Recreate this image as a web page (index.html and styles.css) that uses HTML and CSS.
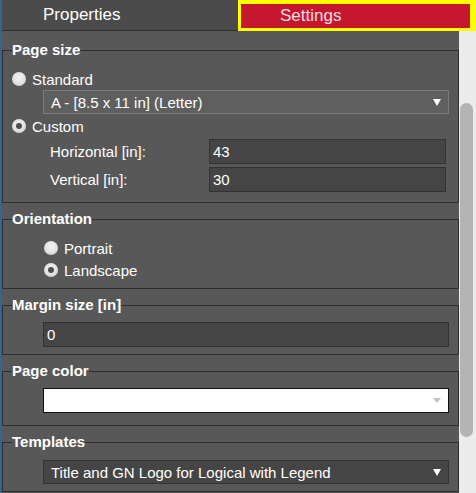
FILE: index.html
```html
<!DOCTYPE html>
<html>
<head>
<meta charset="utf-8">
<link rel="stylesheet" href="styles.css">
</head>
<body>
<div class="app">
  <div class="tabs">
    <div class="tab tab-properties">Properties</div>
    <div class="tab tab-settings">Settings</div>
  </div>
  <div class="main">
    <div class="content">
      <fieldset class="group group-size">
        <legend>Page size</legend>
        <div class="radio-row"><span class="radio"></span><span>Standard</span></div>
        <div class="select select-disabled"><span>A - [8.5 x 11 in] (Letter)</span><span class="caret"></span></div>
        <div class="radio-row row-custom"><span class="radio checked"></span><span>Custom</span></div>
        <div class="field-row"><span class="field-label">Horizontal [in]:</span><span class="input input-dim">43</span></div>
        <div class="field-row"><span class="field-label">Vertical [in]:</span><span class="input input-dim">30</span></div>
      </fieldset>
      <fieldset class="group group-orient">
        <legend>Orientation</legend>
        <div class="radio-row indent"><span class="radio"></span><span>Portrait</span></div>
        <div class="radio-row indent row-landscape"><span class="radio checked"></span><span>Landscape</span></div>
      </fieldset>
      <fieldset class="group group-margin">
        <legend>Margin size [in]</legend>
        <div class="input input-wide">0</div>
      </fieldset>
      <fieldset class="group group-color">
        <legend>Page color</legend>
        <div class="color-box"><span class="caret caret-light"></span></div>
      </fieldset>
      <fieldset class="group group-templates">
        <legend>Templates</legend>
        <div class="select select-dark"><span>Title and GN Logo for Logical with Legend</span><span class="caret"></span></div>
      </fieldset>
    </div>
    <div class="scrollbar"><div class="thumb"></div></div>
  </div>
</div>
</body>
</html>
```

FILE: styles.css
```css
* { box-sizing: border-box; }
html, body { margin: 0; padding: 0; }
body {
  width: 476px;
  height: 493px;
  overflow: hidden;
  background: #585858;
  font-family: "Liberation Sans", Arial, sans-serif;
  font-size: 15px;
  color: #ffffff;
}
.app {
  height: 493px;
  display: flex;
  flex-direction: column;
  border-left: 2px solid #3b6094;
}
.tabs {
  height: 31px;
  display: flex;
  flex: none;
}
.tab {
  height: 31px;
  display: flex;
  align-items: center;
  font-size: 17px;
}
.tab-properties {
  width: 236px;
  background: #4b4b4b;
  border-bottom: 1px solid #303030;
  padding-left: 41px;
}
.tab-settings {
  flex: 1;
  background: #c5182f;
  border-style: solid;
  border-color: #ffff00;
  border-width: 4px 6px 3px 3px;
  padding-left: 39px;
  color: #f6dde1;
}
.main {
  flex: 1;
  display: flex;
  min-height: 0;
}
.content {
  flex: 1;
  display: flex;
  flex-direction: column;
  gap: 7px;
  padding-top: 10px;
}
.group {
  margin: 0;
  border: 1px solid #2e2e2e;
  padding: 10px 9px 9px 9px;
  min-width: 0;
  display: flex;
  flex-direction: column;
}
.group legend {
  padding: 0;
  font-weight: bold;
  font-size: 15px;
  line-height: 18px;
}
.group-size { padding-bottom: 10px; }
.group-orient { padding-bottom: 8px; }
.group-margin { padding-top: 8px; padding-bottom: 7px; }
.group-color { padding-top: 8px; padding-bottom: 12px; }
.group-templates { padding-top: 9px; padding-bottom: 7px; }

.radio-row {
  height: 20px;
  display: flex;
  align-items: center;
  gap: 6px;
}
.radio-row.indent { margin-left: 32px; }
.row-custom { margin-top: 2px; }
.row-landscape { margin-top: 2px; }
.radio {
  width: 14px;
  height: 14px;
  border-radius: 50%;
  background: radial-gradient(circle at 50% 40%, #f4f4f4 0%, #e2e2e2 55%, #bdbdbd 100%);
  display: flex;
  align-items: center;
  justify-content: center;
  flex: none;
}
.radio.checked::after {
  content: "";
  width: 6px;
  height: 6px;
  border-radius: 50%;
  background: #505050;
}
.select {
  margin-left: 31px;
  height: 24px;
  display: flex;
  align-items: center;
  justify-content: space-between;
  padding: 0 7px 0 7px;
}
.select-disabled {
  margin-top: 1px;
  background: #5f5f5f;
  border: 1px solid #7b7b7b;
}
.select-dark {
  background: #454545;
  border: 1px solid #333333;
}
.caret {
  width: 0;
  height: 0;
  border-left: 4px solid transparent;
  border-right: 4px solid transparent;
  border-top: 7px solid #ffffff;
}
.caret-light {
  border-left-width: 4px;
  border-right-width: 4px;
  border-top: 5px solid #c4c4c4;
}
.field-row {
  margin-top: 3px;
  margin-left: 38px;
  display: flex;
  align-items: center;
  height: 25px;
}
.field-label { width: 159px; flex: none; }
.input {
  height: 25px;
  background: #454545;
  border: 1px solid #333333;
  display: flex;
  align-items: center;
  padding-left: 3px;
}
.input-dim { width: 237px; }
.input-wide { margin-left: 31px; }
.color-box {
  margin-left: 31px;
  height: 25px;
  background: #ffffff;
  border: 1px solid #111111;
  display: flex;
  align-items: center;
  justify-content: flex-end;
  padding-right: 7px;
}
.scrollbar {
  width: 17px;
  flex: none;
  background: #ececec;
  padding: 72px 3px 0 1px;
}
.thumb {
  height: 334px;
  border-radius: 7px;
  background: #b4b4b4;
}
```
